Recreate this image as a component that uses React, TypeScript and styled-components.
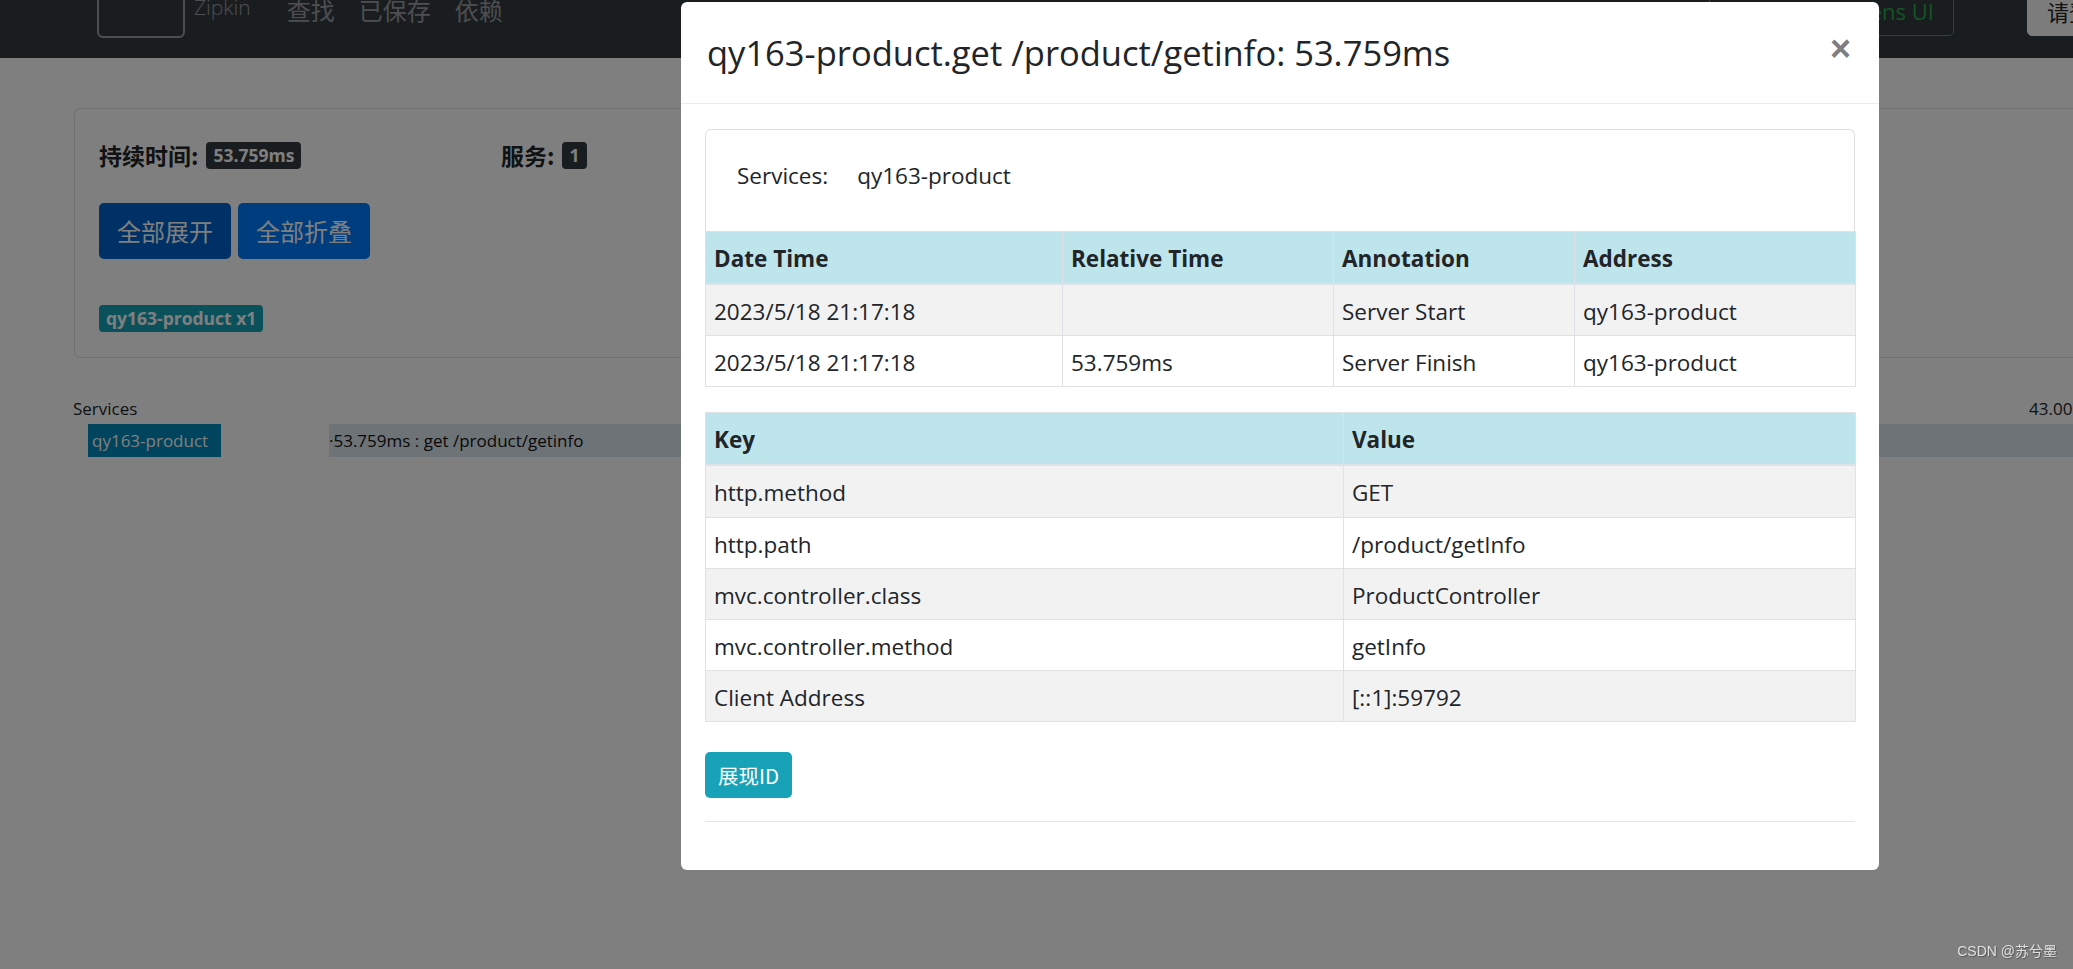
import React from 'react';
import styled, { createGlobalStyle } from 'styled-components';

const GlobalStyle = createGlobalStyle`
  html, body {
    margin: 0;
    padding: 0;
    overflow: hidden;
  }
  body {
    font-family: "Segoe UI", "Open Sans", "Noto Sans CJK SC", sans-serif;
    color: #212529;
    background: #fff;
  }
  * {
    box-sizing: border-box;
  }
`;

const Page = styled.div`
  width: 2120px;
  height: 969px;
  position: relative;
`;

const Navbar = styled.nav`
  height: 58px;
  background: #343a40;
  display: flex;
  align-items: flex-start;
  padding-left: 97px;
  overflow: hidden;
`;

const LogoBox = styled.div`
  width: 88px;
  height: 60px;
  margin-top: -22px;
  border: 2px solid #9a9da0;
  border-radius: 6px;
`;

const Brand = styled.span`
  margin: -3px 0 0 9px;
  font-size: 21px;
  line-height: 1;
  font-weight: 300;
  color: #9a9da0;
`;

const NavLinks = styled.div`
  display: flex;
  gap: 24px;
  margin-left: 36px;
`;

const NavLink = styled.a`
  font-family: "Noto Sans CJK SC", sans-serif;
  font-size: 24px;
  line-height: 1;
  margin-top: -2px;
  color: #9a9da0;
`;

const NavRight = styled.div`
  margin-left: auto;
  display: flex;
  gap: 73px;
  margin-top: -14px;
`;

const LensButton = styled.button<{ $primary?: boolean }>`
  height: 50px;
  padding: 0 19px;
  font-family: "Segoe UI", "Open Sans", "Noto Sans CJK SC", sans-serif;
  font-size: 22px;
  white-space: nowrap;
  border-radius: 5px;
  border: 1px solid ${(p) => (p.$primary ? '#f8f9fa' : '#28a745')};
  background: ${(p) => (p.$primary ? '#f8f9fa' : 'transparent')};
  color: ${(p) => (p.$primary ? '#212529' : '#28a745')};
  width: ${(p) => (p.$primary ? '93px' : 'auto')};
  overflow: hidden;
  text-align: left;
`;

const Main = styled.main`
  padding: 50px 0 0 73px;
`;

const Panel = styled.section`
  margin-left: 1px;
  height: 250px;
  border: 1px solid #dee2e6;
  border-radius: 6px;
  padding: 31px 24px 0;
`;

const StatsRow = styled.div`
  display: grid;
  grid-template-columns: 402px 402px;
`;

const Stat = styled.div`
  font-family: "Noto Sans CJK SC", sans-serif;
  font-weight: 700;
  font-size: 23px;
  line-height: 30px;
  display: flex;
  align-items: center;
  gap: 8px;
  color: #212529;
`;

const Badge = styled.span<{ $tone?: 'dark' | 'info' }>`
  display: inline-block;
  font-family: "Segoe UI", "Open Sans", sans-serif;
  font-weight: 700;
  font-size: 17.5px;
  line-height: 19px;
  padding: 4px 7px;
  border-radius: 4px;
  color: #fff;
  background: ${(p) => (p.$tone === 'info' ? '#17a2b8' : '#343a40')};
`;

const ButtonRow = styled.div`
  display: flex;
  gap: 7px;
  margin-top: 33px;
`;

const ActionButton = styled.button<{ $active?: boolean }>`
  font-family: "Noto Sans CJK SC", sans-serif;
  font-size: 24px;
  line-height: 36px;
  padding: 10px 18px;
  border-radius: 5px;
  border: none;
  color: #fff;
  background: ${(p) => (p.$active ? '#0062cc' : '#007bff')};
`;

const TagRow = styled.div`
  margin-top: 46px;
`;

const Timeline = styled.div`
  margin-top: 39px;
  padding-right: 14px;
`;

const TimelineHeader = styled.div`
  display: flex;
  justify-content: space-between;
  font-size: 17px;
  line-height: 24px;
  color: #212529;
`;

const SpanRow = styled.div`
  display: grid;
  grid-template-columns: 15px 133px 108px 1fr;
  height: 33px;
  margin-top: 3px;
`;

const ServiceName = styled.div`
  grid-column: 2;
  background: #0088bb;
  color: #fff;
  font-size: 17px;
  line-height: 33px;
  padding-left: 4px;
  white-space: nowrap;
`;

const SpanBar = styled.div`
  grid-column: 4;
  background: #dce6ee;
  color: #111;
  font-size: 17px;
  line-height: 33px;
  white-space: nowrap;
`;

const Backdrop = styled.div`
  position: fixed;
  inset: 0;
  background: rgba(0, 0, 0, 0.5);
`;

const Modal = styled.div`
  position: absolute;
  top: 2px;
  left: 681px;
  width: 1198px;
  background: #fff;
  border-radius: 6px;
`;

const ModalHeader = styled.div`
  height: 102px;
  display: flex;
  align-items: center;
  justify-content: space-between;
  padding: 0 28px 0 26px;
  border-bottom: 1px solid #e9ecef;
`;

const ModalTitle = styled.h4`
  margin: 0;
  font-size: 34.5px;
  font-weight: 400;
  line-height: 1.5;
  color: #212529;
`;

const Close = styled.button`
  border: none;
  background: none;
  padding: 0;
  margin-top: -8px;
  font-family: "Liberation Sans", sans-serif;
  font-size: 36px;
  font-weight: 700;
  line-height: 1;
  color: #000;
  opacity: 0.5;
`;

const ModalBody = styled.div`
  padding: 25px 24px 48px;
`;

const Card = styled.div`
  height: 102px;
  border: 1px solid #dfdfdf;
  border-bottom: none;
  border-radius: 6px 6px 0 0;
  padding: 29px 31px 0;
  display: flex;
  gap: 29px;
  font-size: 22.5px;
  line-height: 34px;
`;

const Table = styled.table<{ $gap?: boolean }>`
  width: 100%;
  border-collapse: collapse;
  table-layout: fixed;
  font-size: 22.5px;
  line-height: 34px;
  color: #212529;
  margin-top: ${(p) => (p.$gap ? '25px' : '0')};
`;

const Th = styled.th<{ $w: number }>`
  width: ${(p) => p.$w}px;
  text-align: left;
  font-weight: 700;
  padding: 10px 8px 7px;
  background: #bee5eb;
  border: 1px solid #dee2e6;
  border-bottom-width: 2px;
`;

const Tr = styled.tr<{ $striped?: boolean }>`
  background: ${(p) => (p.$striped ? '#f2f2f2' : '#fff')};
`;

const Td = styled.td`
  padding: 10px 8px 6.2px;
  border: 1px solid #dee2e6;
  white-space: nowrap;
`;

const InfoButton = styled.button`
  margin-top: 30px;
  height: 46px;
  padding: 0 13px;
  border: none;
  border-radius: 5px;
  background: #17a2b8;
  color: #fff;
  font-family: "Noto Sans CJK SC", sans-serif;
  font-size: 20.5px;
  line-height: 46px;
`;

const Divider = styled.hr`
  margin: 23px 0 0;
  border: none;
  border-top: 1px solid rgba(0, 0, 0, 0.1);
`;

const Watermark = styled.div`
  position: fixed;
  right: 16px;
  bottom: 9px;
  font-family: "Liberation Sans", "Noto Sans CJK SC", sans-serif;
  font-size: 14px;
  color: #e0e0e0;
  text-shadow: 1px 1px 1px #555;
`;

const annotations = [
  { time: '2023/5/18 21:17:18', relative: '', name: 'Server Start', address: 'qy163-product' },
  { time: '2023/5/18 21:17:18', relative: '53.759ms', name: 'Server Finish', address: 'qy163-product' },
];

const tags = [
  ['http.method', 'GET'],
  ['http.path', '/product/getInfo'],
  ['mvc.controller.class', 'ProductController'],
  ['mvc.controller.method', 'getInfo'],
  ['Client Address', '[::1]:59792'],
];

const App = () => (
  <Page>
    <GlobalStyle />
    <Navbar>
      <LogoBox />
      <Brand>Zipkin</Brand>
      <NavLinks>
        <NavLink>查找</NavLink>
        <NavLink>已保存</NavLink>
        <NavLink>依赖</NavLink>
      </NavLinks>
      <NavRight>
        <LensButton>Go to Zipkin Lens UI</LensButton>
        <LensButton $primary>请登录</LensButton>
      </NavRight>
    </Navbar>

    <Main>
      <Panel>
        <StatsRow>
          <Stat>
            持续时间: <Badge>53.759ms</Badge>
          </Stat>
          <Stat>
            服务: <Badge>1</Badge>
          </Stat>
        </StatsRow>
        <ButtonRow>
          <ActionButton $active>全部展开</ActionButton>
          <ActionButton>全部折叠</ActionButton>
        </ButtonRow>
        <TagRow>
          <Badge $tone="info">qy163-product x1</Badge>
        </TagRow>
      </Panel>

      <Timeline>
        <TimelineHeader>
          <span>Services</span>
          <span>43.007ms</span>
        </TimelineHeader>
        <SpanRow>
          <ServiceName>qy163-product</ServiceName>
          <SpanBar>·53.759ms : get /product/getinfo</SpanBar>
        </SpanRow>
      </Timeline>
    </Main>

    <Backdrop>
      <Modal>
        <ModalHeader>
          <ModalTitle>qy163-product.get /product/getinfo: 53.759ms</ModalTitle>
          <Close>×</Close>
        </ModalHeader>
        <ModalBody>
          <Card>
            <span>Services:</span>
            <span>qy163-product</span>
          </Card>
          <Table>
            <thead>
              <tr>
                <Th $w={357}>Date Time</Th>
                <Th $w={271}>Relative Time</Th>
                <Th $w={241}>Annotation</Th>
                <Th $w={281}>Address</Th>
              </tr>
            </thead>
            <tbody>
              {annotations.map((a, i) => (
                <Tr key={a.name} $striped={i % 2 === 0}>
                  <Td>{a.time}</Td>
                  <Td>{a.relative}</Td>
                  <Td>{a.name}</Td>
                  <Td>{a.address}</Td>
                </Tr>
              ))}
            </tbody>
          </Table>
          <Table $gap>
            <thead>
              <tr>
                <Th $w={638}>Key</Th>
                <Th $w={512}>Value</Th>
              </tr>
            </thead>
            <tbody>
              {tags.map(([k, v], i) => (
                <Tr key={k} $striped={i % 2 === 0}>
                  <Td>{k}</Td>
                  <Td>{v}</Td>
                </Tr>
              ))}
            </tbody>
          </Table>
          <InfoButton>展现ID</InfoButton>
          <Divider />
        </ModalBody>
      </Modal>
    </Backdrop>
    <Watermark>CSDN @苏兮墨</Watermark>
  </Page>
);

export default App;
